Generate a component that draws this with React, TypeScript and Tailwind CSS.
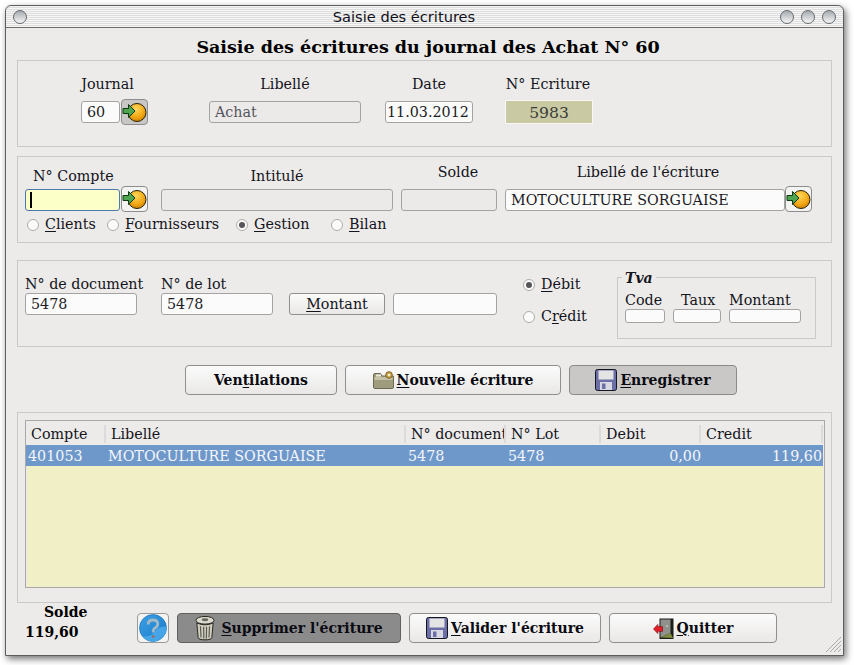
import type { ReactNode } from 'react';

function WinDot() {
  return (
    <span className="w-[14px] h-[14px] rounded-full border-[1.5px] border-[#666a6e] bg-gradient-to-b from-[#a4aab0] via-[#cdd1d4] to-[#f6f6f6]" />
  );
}

function GoIcon() {
  return (
    <svg width="25" height="23" viewBox="0 0 25 23">
      <defs>
        <radialGradient id="gold" cx="45%" cy="30%" r="75%">
          <stop offset="0%" stopColor="#ffd65a" />
          <stop offset="65%" stopColor="#f0a510" />
          <stop offset="100%" stopColor="#c87a05" />
        </radialGradient>
      </defs>
      <circle cx="15" cy="11.5" r="9" fill="url(#gold)" stroke="#2a2000" strokeWidth="1" />
      <path d="M1 7.5 L6.5 7.5 L6.5 3.5 L13 10 L6.5 16.5 L6.5 12.5 L1 12.5 Z" fill="#4fa54f" stroke="#0e3a12" strokeWidth="1" strokeLinejoin="round" />
    </svg>
  );
}

function Floppy() {
  return (
    <svg width="22" height="22" viewBox="0 0 22 22" className="shrink-0">
      <rect x="0.5" y="0.5" width="21" height="21" rx="2" fill="#6b6fa6" stroke="#15151f" />
      <rect x="3.5" y="1.5" width="15" height="9" fill="#e4e4e4" />
      <rect x="5" y="13" width="12" height="8" fill="#d8d8e2" />
      <rect x="7" y="14.5" width="3.5" height="5.5" fill="#6b6fa6" />
    </svg>
  );
}

function FolderIcon() {
  return (
    <svg width="21" height="18" viewBox="0 0 21 18" className="shrink-0">
      <path d="M0.5 4 L0.5 16 Q0.5 17.5 2 17.5 L19 17.5 Q20.5 17.5 20.5 16 L20.5 5 L9 5 L7.5 2.5 L2 2.5 Q0.5 2.5 0.5 4 Z" fill="#9f9c7e" stroke="#6d6a52" />
      <rect x="1.5" y="6" width="18" height="3" fill="#c4c1a6" />
      <rect x="3" y="3.5" width="5" height="2" fill="#ecebe0" />
      <circle cx="16" cy="4" r="3.3" fill="#c9a445" stroke="#80622a" />
      <circle cx="16" cy="4" r="1.3" fill="#f3efd5" />
    </svg>
  );
}

function TrashIcon() {
  return (
    <svg width="20" height="26" viewBox="0 0 22 27" className="shrink-0">
      <ellipse cx="11" cy="5" rx="10" ry="4.2" fill="#dcdace" stroke="#1c1c18" />
      <ellipse cx="11" cy="4.5" rx="3.5" ry="1.6" fill="#66665e" />
      <path d="M2 8 L3.5 24 Q4 26.5 11 26.5 Q18 26.5 18.5 24 L20 8 Q11 12 2 8 Z" fill="#cfcdbd" stroke="#1c1c18" />
      <path d="M6 11.5 L6.6 24 M9.5 12 L9.7 25 M12.7 12 L12.5 25 M16 11.5 L15.4 24" stroke="#5c5c54" strokeWidth="1.3" />
    </svg>
  );
}

function HelpIcon() {
  return (
    <svg width="30" height="28" viewBox="0 0 30 28">
      <defs>
        <linearGradient id="helpBlue" x1="0" y1="0" x2="1" y2="1">
          <stop offset="0%" stopColor="#3fa2e6" />
          <stop offset="100%" stopColor="#1577c8" />
        </linearGradient>
      </defs>
      <circle cx="15" cy="14" r="13.5" fill="url(#helpBlue)" stroke="#0f66ad" strokeWidth="0.6" />
      <path d="M4 22 Q13 24 18 16 Q22 12 28.4 12.5 A13.5 13.5 0 0 1 4 22 Z" fill="#52b0ee" opacity="0.75" />
      <path d="M10.2 10.5 Q10.2 6 15 6 Q19.8 6 19.8 10 Q19.8 12.5 17 14 Q15.2 15 15.2 18.5" fill="none" stroke="#a3b8c6" strokeWidth="2.8" />
      <circle cx="15.2" cy="22.5" r="1.3" fill="#a8644c" />
    </svg>
  );
}

function DoorIcon() {
  return (
    <svg width="21" height="21" viewBox="0 0 21 21" className="shrink-0">
      <rect x="6.5" y="0.5" width="14" height="20.5" fill="#1c1c1a" />
      <path d="M7.5 1.5 L17.5 1.5 L17.5 15 L7.5 19.5 Z" fill="#8f918c" />
      <path d="M7.5 19.5 L17.5 15 L20 20 Z" fill="#7f8c40" />
      <circle cx="14" cy="8" r="0.8" fill="#f0f0f0" />
      <path d="M0.5 11 L4.8 6.5 L4.8 8.7 L9.5 8.7 L9.5 13.3 L4.8 13.3 L4.8 15.5 Z" fill="#e2202a" stroke="#8c0c12" strokeWidth="0.7" />
    </svg>
  );
}

function Input({ value, className = '', muted = false }: { value?: string; className?: string; muted?: boolean }) {
  return (
    <div
      className={`h-[22px] rounded-[3px] border border-[#a3a3a3] px-[5px] leading-[20px] whitespace-nowrap ${
        muted ? 'bg-[#ebeae8] text-[#55555f]' : 'bg-[#fbfbfb] text-[#1c1c24]'
      } ${className}`}
    >
      {value}
    </div>
  );
}

function Radio({ mnemonic, before, rest, checked = false, className = '' }: { mnemonic: string; before?: string; rest: string; checked?: boolean; className?: string }) {
  return (
    <div className={`flex items-center ${className}`}>
      <span className="w-[12px] h-[12px] rounded-full border border-[#b0aca8] bg-[#fbfbfb] flex items-center justify-center shrink-0">
        {checked && <span className="w-[6px] h-[6px] rounded-full bg-[#55555a]" />}
      </span>
      <span className="ml-[6px] whitespace-nowrap">
        {before}
        <u className="underline-offset-2">{mnemonic}</u>
        {rest}
      </span>
    </div>
  );
}

function IconBtn({ children, pressed = false }: { children: ReactNode; pressed?: boolean }) {
  return (
    <div
      className={`w-[27px] h-[26px] rounded-[4px] border border-[#8d8d8d] flex items-center justify-center shrink-0 ${
        pressed ? 'bg-[#c8c7c5]' : 'bg-[#f3f3f2]'
      }`}
    >
      {children}
    </div>
  );
}

function Button({ className, tone = 'light', children }: { className: string; tone?: 'light' | 'mid' | 'dark'; children: ReactNode }) {
  const tones = {
    light: 'bg-gradient-to-b from-[#fbfbfb] to-[#e9e8e6] border-[#8f8f8f]',
    mid: 'bg-[#c9c8c6] border-[#8a8a8a]',
    dark: 'bg-[#8b8b8b] border-[#606060]',
  };
  return (
    <div className={`h-[30px] rounded-[4px] border flex items-center justify-center font-bold text-[14px] text-[#0a0a12] ${tones[tone]} ${className}`}>
      {children}
    </div>
  );
}

function Panel({ className, children }: { className: string; children: ReactNode }) {
  return <div className={`mx-[11px] w-[815px] border border-[#c9c9c9] ${className}`}>{children}</div>;
}

const columns = 'grid grid-cols-[80px_300px_100px_95px_100px_122px]';

export default function App() {
  return (
    <div className="w-[854px] h-[665px] bg-white font-['DejaVu_Serif',serif] text-[14.3px] text-[#14141c]">
      <div className="pt-[5px] pl-[5px]">
        <div className="relative w-[839px] h-[651px] border border-[#5e5e5e] rounded-t-[6px] bg-[#ecebe9] shadow-[2px_3px_7px_rgba(0,0,0,0.55)]">
          {/* title bar */}
          <div className="h-[22px] rounded-t-[6px] border-b border-[#6b6b6b] flex items-center pl-[7px] pr-[7px] bg-[repeating-linear-gradient(180deg,#f6f6f6_0,#f6f6f6_1px,#dedede_1px,#dedede_2px)]">
            <WinDot />
            <div className="flex-1 text-center font-['DejaVu_Sans',sans-serif] text-[14.6px] leading-[20px] text-[#101018] pl-[1px]">Saisie des écritures</div>
            <div className="flex gap-[7px]">
              <WinDot />
              <WinDot />
              <WinDot />
            </div>
          </div>

          <div className="h-[32px] flex items-center justify-center font-bold text-[17.5px] text-black pt-[7px] pl-[7px]">
            Saisie des écritures du journal des Achat N° 60
          </div>

          {/* journal */}
          <Panel className="h-[87px] pl-[63px] pt-[13px] flex">
            <div className="w-[67px]">
              <div className="h-[20px] text-center pr-[14px]">Journal</div>
              <div className="mt-[5px] flex items-center">
                <Input value="60" className="w-[39px]" />
                <div className="ml-[1px]">
                  <IconBtn pressed>
                    <GoIcon />
                  </IconBtn>
                </div>
              </div>
            </div>
            <div className="ml-[61px] w-[152px]">
              <div className="h-[20px] text-center">Libellé</div>
              <div className="mt-[7px]">
                <Input value="Achat" muted />
              </div>
            </div>
            <div className="ml-[24px] w-[88px]">
              <div className="h-[20px] text-center">Date</div>
              <div className="mt-[7px]">
                <Input value="11.03.2012" className="!px-[1px]" />
              </div>
            </div>
            <div className="ml-[32px] w-[88px]">
              <div className="h-[20px] text-center whitespace-nowrap -ml-[2px]">N° Ecriture</div>
              <div className="mt-[6px] h-[24px] border border-[#f8f8f8] bg-[#c9caa4] text-center text-[15.6px] leading-[24px] text-[#3a3a38]">5983</div>
            </div>
          </Panel>

          {/* compte */}
          <Panel className="mt-[9px] h-[87px] pl-[7px]">
            <div className="flex h-[58px]">
              <div className="w-[123px]">
                <div className="h-[29px] pt-[9px] pl-[8px]">N° Compte</div>
                <div className="flex items-start h-[26px]">
                  <div className="mt-[3px] w-[95px] h-[22px] rounded-[3px] border border-[#4f78aa] bg-[#fdffc8] pl-[4px] pt-[2px]">
                    <div className="w-[2px] h-[16px] bg-black" />
                  </div>
                  <div className="ml-[1px]">
                    <IconBtn>
                      <GoIcon />
                    </IconBtn>
                  </div>
                </div>
              </div>
              <div className="ml-[13px] w-[232px]">
                <div className="h-[32px] pt-[9px] text-center">Intitulé</div>
                <Input muted />
              </div>
              <div className="ml-[8px] w-[96px]">
                <div className="h-[32px] pt-[5px] text-center pl-[18px]">Solde</div>
                <Input muted />
              </div>
              <div className="ml-[8px] w-[307px]">
                <div className="h-[29px] pt-[5px] text-center pr-[21px]">Libellé de l'écriture</div>
                <div className="flex items-start h-[26px]">
                  <Input value="MOTOCULTURE SORGUAISE" className="mt-[3px] w-[280px]" />
                  <IconBtn>
                    <GoIcon />
                  </IconBtn>
                </div>
              </div>
            </div>
            <div className="flex h-[20px] items-center pl-[2px]">
              <Radio mnemonic="C" rest="lients" className="w-[80px]" />
              <Radio mnemonic="F" rest="ournisseurs" className="w-[129px]" />
              <Radio mnemonic="G" rest="estion" checked className="w-[95px]" />
              <Radio mnemonic="B" rest="ilan" />
            </div>
          </Panel>

          {/* document */}
          <Panel className="mt-[17px] h-[87px] pl-[7px] flex">
            <div className="w-[112px] pt-[14px]">
              <div className="h-[18px] leading-[18px] whitespace-nowrap">N° de document</div>
              <Input value="5478" />
            </div>
            <div className="ml-[24px] w-[112px] pt-[14px]">
              <div className="h-[18px] leading-[18px]">N° de lot</div>
              <Input value="5478" />
            </div>
            <div className="ml-[16px] w-[96px] pt-[32px]">
              <div className="h-[22px] rounded-[3px] border border-[#8f8f8f] bg-gradient-to-b from-[#fbfbfb] to-[#e9e8e6] text-center leading-[20px]">
                <u className="underline-offset-2">M</u>ontant
              </div>
            </div>
            <div className="ml-[8px] w-[104px] pt-[32px]">
              <Input />
            </div>
            <div className="ml-[26px] w-[94px] pt-[14px]">
              <Radio mnemonic="D" rest="ébit" checked className="h-[20px]" />
              <Radio before="C" mnemonic="r" rest="édit" className="h-[20px] mt-[12px]" />
            </div>
            <div className="mt-[16px] relative w-[199px] h-[62px] border border-[#c9c9c9] pl-[7px] pt-[13px] flex">
              <span className="absolute -top-[10px] left-[4px] px-[3px] bg-[#ecebe9] font-bold italic text-[14px]">Tva</span>
              <div className="w-[48px]">
                <div className="h-[18px] leading-[18px]">Code</div>
                <Input className="w-[40px] !h-[14px]" />
              </div>
              <div className="w-[56px]">
                <div className="h-[18px] leading-[18px] pl-[8px]">Taux</div>
                <Input className="w-[48px] !h-[14px]" />
              </div>
              <div className="w-[72px]">
                <div className="h-[18px] leading-[18px] whitespace-nowrap">Montant</div>
                <Input className="!h-[14px]" />
              </div>
            </div>
          </Panel>

          {/* actions */}
          <div className="mt-[18px] pl-[179px] flex gap-[8px]">
            <Button className="w-[152px]">
              <span>
                Ven<u className="underline-offset-2">t</u>ilations
              </span>
            </Button>
            <Button className="w-[216px]">
              <FolderIcon />
              <span className="ml-[3px]">
                <u className="underline-offset-2">N</u>ouvelle écriture
              </span>
            </Button>
            <Button className="w-[168px]" tone="mid">
              <Floppy />
              <span className="ml-[3px]">
                <u className="underline-offset-2">E</u>nregistrer
              </span>
            </Button>
          </div>

          {/* table */}
          <Panel className="mt-[17px] h-[191px] pl-[7px] pt-[7px]">
            <div className="w-[800px] h-[168px] border border-[#a8a8a8]">
              <div className={`${columns} h-[24px] pt-[2px] items-center leading-[18px]`}>
                {['Compte', 'Libellé', 'N° document', 'N° Lot', 'Debit', 'Credit'].map((h) => (
                  <div key={h} className="h-[18px] border-r-2 border-[#dcdbd9] pl-[5px] overflow-hidden whitespace-nowrap">
                    {h}
                  </div>
                ))}
              </div>
              <div className="h-[142px] ml-[1px] mr-[1px] bg-[#f0efc5]">
                <div className={`${columns} -ml-[1px] h-[21px] pl-[1px] bg-[#6f98ca] text-[#f4f6fa] leading-[23px] whitespace-nowrap`}>
                  <div className="pl-[1px]">401053</div>
                  <div className="pl-[1px]">MOTOCULTURE SORGUAISE</div>
                  <div className="pl-[1px]">5478</div>
                  <div className="pl-[1px]">5478</div>
                  <div className="text-right pr-[1px]">0,00</div>
                  <div className="text-right pr-[2px]">119,60</div>
                </div>
              </div>
            </div>
          </Panel>

          {/* bottom */}
          <div className="mt-[10px] pl-[19px] flex">
            <div className="w-[112px] h-[30px] font-bold text-[14px] text-black leading-[20px]">
              <div className="pl-[19px] -mt-[11px]">Solde</div>
              <div>119,60</div>
            </div>
            <div className="w-[32px] h-[30px] rounded-[4px] border border-[#9a9a9a] bg-[#f3f3f2] flex items-center justify-center">
              <HelpIcon />
            </div>
            <div className="ml-[8px] flex gap-[8px]">
              <Button className="w-[224px]" tone="dark">
                <TrashIcon />
                <span className="ml-[6px]">
                  <u className="underline-offset-2">S</u>upprimer l'écriture
                </span>
              </Button>
              <Button className="w-[192px]">
                <Floppy />
                <span className="ml-[3px]">
                  <u className="underline-offset-2">V</u>alider l'écriture
                </span>
              </Button>
              <Button className="w-[168px]">
                <DoorIcon />
                <span className="ml-[3px]">
                  <u className="underline-offset-2">Q</u>uitter
                </span>
              </Button>
            </div>
          </div>

          {/* resize grip */}
          <svg className="absolute right-[2px] bottom-[3px]" width="16" height="16" viewBox="0 0 16 16">
            <path d="M1 16 L16 1 M5 16 L16 5 M9 16 L16 9 M13 16 L16 13" stroke="#a8a8a8" strokeWidth="1" />
          </svg>
        </div>
      </div>
    </div>
  );
}
